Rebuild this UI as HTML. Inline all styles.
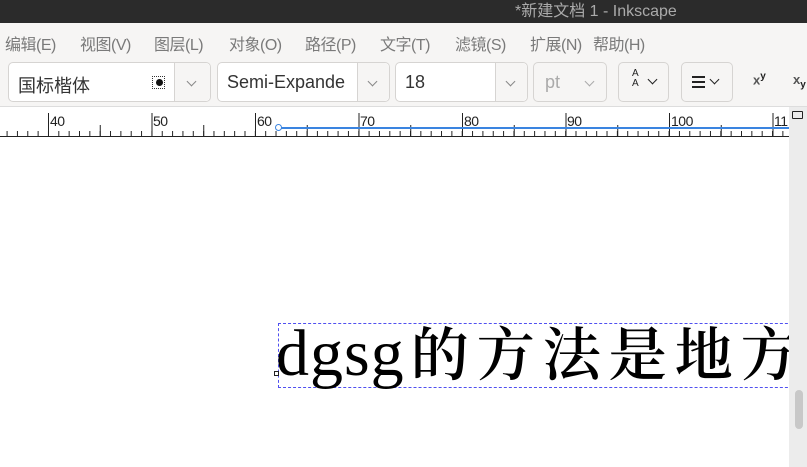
<!DOCTYPE html>
<html><head><meta charset="utf-8"><style>
*{margin:0;padding:0;box-sizing:border-box}
body{width:807px;height:467px;overflow:hidden;background:#fff;font-family:"Liberation Sans","Noto Sans CJK SC",sans-serif;position:relative}
.title{position:absolute;left:0;top:0;width:807px;height:23px;background:#2b2b2b;color:#aaa;font-size:16px}
.title span{position:absolute;left:515px;top:-3px}
.menu{position:absolute;top:23px;left:0;width:807px;height:35px;background:#f6f5f4;color:#7a7a7a;font-size:16px}
.menu span{position:absolute;top:8px;letter-spacing:-0.5px}
.tb{position:absolute;top:58px;left:0;width:807px;height:49px;background:#f6f5f4;border-bottom:1px solid #ddd}
.box{position:absolute;top:4px;height:40px;border:1px solid #d6d4d2;border-radius:5px;background:#fff;font-size:18px;color:#333}
.box .t{position:absolute;left:9px;top:9px}
.box .dd{position:absolute;right:0;top:0;bottom:0;border-left:1px solid #d6d4d2;background:#f6f5f4;border-radius:0 5px 5px 0}
.chev{position:absolute;top:15px;width:7px;height:7px;border-right:1.5px solid #888;border-bottom:1.5px solid #888;transform:rotate(45deg)}
.btn{position:absolute;top:4px;height:40px;border:1px solid #d6d4d2;border-radius:5px;background:#f6f5f4}
.ruler{position:absolute;top:107px;left:0;width:789px;height:30px;background:#fff;border-bottom:1px solid #222;overflow:hidden}
.ruler span{position:absolute;top:6px;font-size:14px;color:#222;letter-spacing:-0.5px}
.ticks{position:absolute;left:0;right:0;bottom:0}
.sb{position:absolute;left:789px;top:107px;width:18px;height:360px;background:#ececec}
</style></head><body>
<div class="title"><span>*新建文档 1 - Inkscape</span></div>
<div class="menu">
<span style="left:5px">编辑(E)</span><span style="left:80px">视图(V)</span><span style="left:154px">图层(L)</span><span style="left:229px">对象(O)</span><span style="left:305px">路径(P)</span><span style="left:380px">文字(T)</span><span style="left:455px">滤镜(S)</span><span style="left:530px">扩展(N)</span><span style="left:593px">帮助(H)</span>
</div>
<div class="tb">
<div class="box" style="left:8px;width:203px"><span class="t">国标楷体</span>
<span style="position:absolute;left:143px;top:13px;width:13px;height:13px;border:1px dotted #333;background:#fff"><span style="position:absolute;left:3px;top:2px;width:7px;height:7px;border-radius:50%;background:#111"></span></span>
<div class="dd" style="width:36px"><div class="chev" style="left:13px"></div></div></div>
<div class="box" style="left:217px;width:173px;overflow:hidden"><span class="t">Semi-Expande</span><div class="dd" style="width:32px"><div class="chev" style="left:11px"></div></div></div>
<div class="box" style="left:395px;width:133px"><span class="t">18</span><div class="dd" style="width:32px"><div class="chev" style="left:11px"></div></div></div>
<div class="box" style="left:533px;width:74px;background:#f6f5f4;color:#aaa"><span class="t" style="left:11px">pt</span><div class="chev" style="left:52px;border-color:#aaa"></div></div>
<div class="btn" style="left:618px;width:51px"><span style="position:absolute;left:13px;top:6px;font-size:10px;line-height:10px;color:#222">A<br>A</span><div class="chev" style="left:30px;top:13px;border-color:#222"></div></div>
<div class="btn" style="left:681px;width:52px"><span style="position:absolute;left:10px;top:13px;width:13px;height:13px;background:linear-gradient(#222 0 2px,transparent 2px 5px,#222 5px 7px,transparent 7px 10px,#222 10px 12px,transparent 0)"></span><div class="chev" style="left:29px;top:13px;border-color:#222"></div></div>
<span style="position:absolute;left:753px;top:13px;font-size:13px;color:#555;font-weight:bold">x<sup style="font-size:10px;color:#222">y</sup></span>
<span style="position:absolute;left:793px;top:14px;font-size:13px;color:#555;font-weight:bold">x<sub style="font-size:10px;color:#222">y</sub></span>
</div>
<div class="ruler">
<div class="ticks" style="height:5px;background:linear-gradient(90deg,#222 1px,transparent 1px) 6.6px 0/10.35px 5px repeat-x"></div>
<div class="ticks" style="height:11px;background:linear-gradient(90deg,#222 1px,transparent 1px) 48px 0/51.75px 11px repeat-x"></div>
<div class="ticks" style="height:23px;background:linear-gradient(90deg,#222 1px,transparent 1px) 48px 0/103.5px 23px repeat-x"></div>
<span style="left:50px">40</span>
<span style="left:153px">50</span>
<span style="left:257px">60</span>
<span style="left:360px">70</span>
<span style="left:464px">80</span>
<span style="left:567px">90</span>
<span style="left:671px">100</span>
<span style="left:774px">11</span>
<div style="position:absolute;left:280px;top:20px;width:520px;height:2px;background:#3a84e0"></div>
<div style="position:absolute;left:275px;top:17px;width:7px;height:7px;border:1.5px solid #3a84e0;border-radius:50%;background:#fff"></div>
</div>
<div class="sb">
<div style="position:absolute;left:3px;top:4px;width:11px;height:8px;border:1.5px solid #222;border-radius:1px"></div>
<div style="position:absolute;left:6px;top:283px;width:8px;height:39px;background:#c8c8c8;border-radius:4px"></div>
</div>
<div style="position:absolute;left:0;top:137px;width:789px;height:330px;overflow:hidden">
<div style="position:absolute;left:278px;top:186px;width:540px;height:65px;border:1px dashed #5050f0"></div>
<div style="position:absolute;left:274px;top:234px;width:5px;height:5px;border:1px solid #222;background:#fff"></div>
<div style="position:absolute;left:276px;top:167px;white-space:nowrap;font-size:66px;line-height:100px;color:#000;font-family:'Liberation Serif','Noto Serif CJK SC',serif;letter-spacing:1px">dgsg<span style="font-size:58px;letter-spacing:8px;margin-left:6px;font-weight:600">的方法是地方</span></div>
</div>
</body></html>
